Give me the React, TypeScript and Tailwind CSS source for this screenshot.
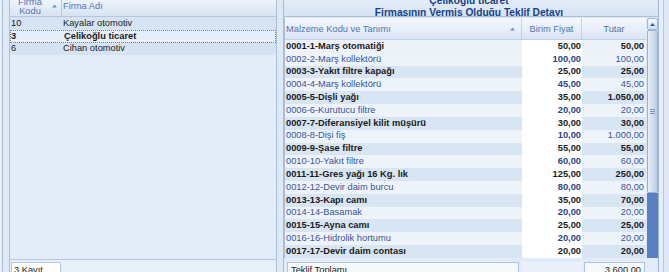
import React from "react";

const rows: [string, string, string][] = [
  ["0001-1-Marş otomatiği", "50,00", "50,00"],
  ["0002-2-Marş kollektörü", "100,00", "100,00"],
  ["0003-3-Yakıt filtre kapağı", "25,00", "25,00"],
  ["0004-4-Marş kollektörü", "45,00", "45,00"],
  ["0005-5-Dişli yağı", "35,00", "1.050,00"],
  ["0006-6-Kurutucu filtre", "20,00", "20,00"],
  ["0007-7-Diferansiyel kilit müşürü", "30,00", "30,00"],
  ["0008-8-Dişi fiş", "10,00", "1.000,00"],
  ["0009-9-Şase filtre", "55,00", "55,00"],
  ["0010-10-Yakıt filtre", "60,00", "60,00"],
  ["0011-11-Gres yağı 16 Kg. lık", "125,00", "250,00"],
  ["0012-12-Devir daim burcu", "80,00", "80,00"],
  ["0013-13-Kapı camı", "35,00", "70,00"],
  ["0014-14-Basamak", "20,00", "20,00"],
  ["0015-15-Ayna camı", "25,00", "25,00"],
  ["0016-16-Hidrolik hortumu", "20,00", "20,00"],
  ["0017-17-Devir daim contası", "20,00", "20,00"],
];

const firms: [string, string][] = [
  ["10", "Kayalar otomotiv"],
  ["3", "Çelikoğlu ticaret"],
  ["6", "Cihan otomotiv"],
];

function SortUp() {
  return (
    <svg width="5" height="4" viewBox="0 0 5 4" className="shrink-0">
      <path d="M2.5 0.5 L4.8 3.5 L0.2 3.5 Z" fill="#6f8bbb" />
    </svg>
  );
}

export default function App() {
  return (
    <div className="w-[669px] h-[272px] overflow-hidden flex bg-[#dfe9f5] text-[9.3px] leading-none font-['Liberation_Sans',Arial,sans-serif] text-[#1b1b1b]">
      {/* far left edge */}
      <div className="w-[2px] bg-[#e8eff9]" />
      <div className="w-[1px] bg-[#a6bad4]" />
      <div className="w-[6px] bg-[#dfe9f5]" />

      {/* left grid */}
      <div className="w-[268px] flex flex-col border-x border-[#a9bedb] bg-[#e3edf9]">
        <div className="h-[17px] overflow-hidden border-b border-[#b5c8e1] bg-gradient-to-b from-[#eef4fb] to-[#d8e4f3]">
          <div className="h-[21px] mt-[-4px] flex text-[#5574ad]">
            <div className="w-[52px] flex items-center border-r border-[#b9cbe3]">
              <div className="w-[40px] flex flex-col items-center leading-[9px]">
                <span>Firma</span>
                <span>Kodu</span>
              </div>
              <div className="ml-[2px] mt-[-2px]">
                <SortUp />
              </div>
            </div>
            <div className="flex-1 flex items-center pl-[1px] leading-[9px]">Firma Adı</div>
          </div>
        </div>
        {firms.map(([k, n], i) => (
          <div
            key={k}
            className={
              "h-[12.8px] flex items-center " +
              (i === 1
                ? "font-bold bg-[#e6eefa] border border-dotted border-[#7d7d7d]"
                : "bg-[#d5e3f2]")
            }
          >
            <div className={"w-[52px] " + (i === 1 ? "pl-0" : "pl-[1px]")}>{k}</div>
            <div className="flex-1 pl-[1px]">{n}</div>
          </div>
        ))}
        <div className="flex-1 border-b border-[#b3c6df]" />
        <div className="h-[12px] bg-[#e7eff9] overflow-hidden">
          <div className="mt-[2px] ml-[1px] w-[50px] h-[14px] border border-[#b6c8df] bg-white pl-[2px] pt-[3px] text-[#1b1b1b]">
            3 Kayıt
          </div>
        </div>
      </div>

      <div className="w-[6px] bg-[#dfe9f5]" />
      <div className="w-[1px] bg-[#a7bcd8]" />

      {/* right content */}
      <div className="w-[374px] flex flex-col">
        {/* title */}
        <div className="h-[17px] overflow-hidden border-b border-[#a9bfdc] bg-gradient-to-b from-[#e3ecf8] to-[#d7e4f3]">
          <div className="mt-[-5.5px] flex flex-col items-center leading-[12px] font-bold text-[10.2px] text-[#15428b] pr-[4px]">
            <span>Çelikoğlu ticaret</span>
            <span>Firmasının Vermiş Olduğu Teklif Detayı</span>
          </div>
        </div>
        <div className="h-[1px] bg-[#dfe9f5]" />

        <div className="h-[240px] flex">
          <div className="w-[362px] flex flex-col border-l border-[#a9bedb]">
            {/* header */}
            <div className="h-[22px] flex border-b border-[#bfd0e6] bg-gradient-to-b from-[#f5f8fc] to-[#d9e5f4] text-[#5574ad]">
              <div className="w-[237px] flex items-center pl-[1px] pt-[2px] border-r border-[#c0d1e7]">
                <span className="flex-1">Malzeme Kodu ve Tanımı</span>
                <span className="mr-[6px] mt-[-1px]">
                  <SortUp />
                </span>
              </div>
              <div className="w-[60px] flex items-center justify-center pt-[2px] border-r border-[#c0d1e7]">
                Birim Fiyat
              </div>
              <div className="flex-1 flex items-center justify-center pt-[2px]">Tutar</div>
            </div>
            {rows.map(([name, price, total], i) => {
              const odd = i % 2 === 0;
              const bg = i === 0 ? "bg-[#edf2f9]" : odd ? "bg-[#d8e5f3]" : "bg-[#eef3fa]";
              return (
                <div key={name} className="h-[12.82px] flex items-center">
                  <div
                    className={
                      "w-[237px] h-full flex items-center pl-[1px] " +
                      bg +
                      (odd ? " font-bold text-[#1b1b1b]" : " text-[#34559e]")
                    }
                  >
                    {name}
                  </div>
                  <div
                    className={
                      "w-[60px] h-full flex items-center justify-end pr-[1px] bg-white font-bold " +
                      (odd ? "text-[#1b1b1b]" : "text-[#2a438a]")
                    }
                  >
                    {price}
                  </div>
                  <div
                    className={
                      "flex-1 h-full flex items-center justify-end pr-[2px] " +
                      bg +
                      (odd ? " font-bold text-[#1b1b1b]" : " text-[#34559e]")
                    }
                  >
                    {total}
                  </div>
                </div>
              );
            })}
          </div>

          {/* scrollbar */}
          <div className="w-[12px] flex flex-col pl-[1px] bg-[#dfe9f5]">
            <div className="h-[12px] flex items-center justify-center rounded-[2px] border border-[#9fb6d7] bg-gradient-to-b from-[#f4f8fd] to-[#d3e0f1]">
              <svg width="5" height="3" viewBox="0 0 5 3">
                <path d="M2.5 0 L5 3 L0 3 Z" fill="#3c5b8c" />
              </svg>
            </div>
            <div className="h-[163px] flex flex-col items-center justify-center gap-[1px] rounded-[2px] border border-[#99b1d3] bg-gradient-to-r from-[#e9f0f9] to-[#bccde4]">
              <div className="w-[5px] h-[1px] bg-[#7f97bd]" />
              <div className="w-[5px] h-[1px] bg-[#7f97bd]" />
              <div className="w-[5px] h-[1px] bg-[#7f97bd]" />
            </div>
            <div className="flex-1 bg-[#5a80c3]" />
          </div>
        </div>

        {/* footer */}
        <div className="flex-1 flex bg-[#e2ebf7] pt-[4px] overflow-hidden">
          <div className="ml-[3px] w-[232px] h-[14px] border border-[#b0c3dd] bg-[#f6f9fc] pl-[3px] pt-[3px]">
            Teklif Toplamı
          </div>
          <div className="ml-[3px] w-[60px] h-[14px] bg-[#e9f0f9]" />
          <div className="ml-[2px] w-[61px] h-[14px] border border-[#b0c3dd] bg-[#f6f9fc] pr-[3px] pt-[3px] text-right">
            3.600,00
          </div>
        </div>
      </div>

      {/* far right edge */}
      <div className="w-[1px] bg-[#9fb5d5]" />
      <div className="w-[4px] bg-[#e6eef9]" />
      <div className="w-[1px] bg-[#b5c7de]" />
      <div className="w-[5px] bg-[#dfe9f5]" />
    </div>
  );
}
